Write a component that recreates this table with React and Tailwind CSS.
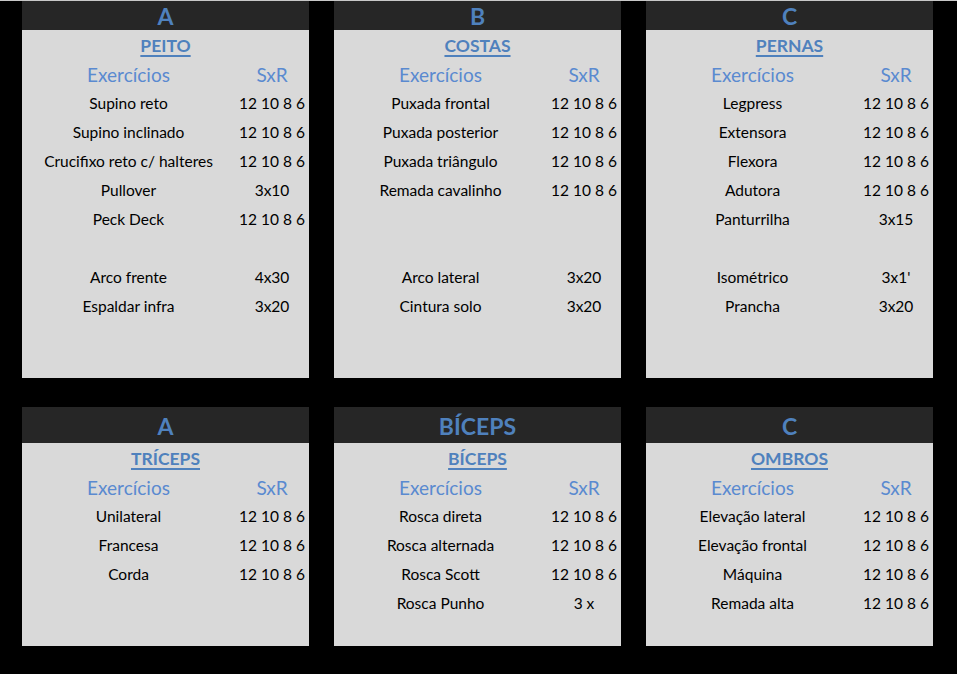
const top = [
  {
    h: "A",
    t: "PEITO",
    rows: [
      ["Supino reto", "12 10 8 6"],
      ["Supino inclinado", "12 10 8 6"],
      ["Crucifixo reto c/ halteres", "12 10 8 6"],
      ["Pullover", "3x10"],
      ["Peck Deck", "12 10 8 6"],
      ["", ""],
      ["Arco frente", "4x30"],
      ["Espaldar infra", "3x20"],
    ],
  },
  {
    h: "B",
    t: "COSTAS",
    rows: [
      ["Puxada frontal", "12 10 8 6"],
      ["Puxada posterior", "12 10 8 6"],
      ["Puxada triângulo", "12 10 8 6"],
      ["Remada cavalinho", "12 10 8 6"],
      ["", ""],
      ["", ""],
      ["Arco lateral", "3x20"],
      ["Cintura solo", "3x20"],
    ],
  },
  {
    h: "C",
    t: "PERNAS",
    rows: [
      ["Legpress", "12 10 8 6"],
      ["Extensora", "12 10 8 6"],
      ["Flexora", "12 10 8 6"],
      ["Adutora", "12 10 8 6"],
      ["Panturrilha", "3x15"],
      ["", ""],
      ["Isométrico", "3x1'"],
      ["Prancha", "3x20"],
    ],
  },
];

const bottom = [
  {
    h: "A",
    t: "TRÍCEPS",
    rows: [
      ["Unilateral", "12 10 8 6"],
      ["Francesa", "12 10 8 6"],
      ["Corda", "12 10 8 6"],
    ],
  },
  {
    h: "BÍCEPS",
    t: "BÍCEPS",
    rows: [
      ["Rosca direta", "12 10 8 6"],
      ["Rosca alternada", "12 10 8 6"],
      ["Rosca Scott", "12 10 8 6"],
      ["Rosca Punho", "3 x"],
    ],
  },
  {
    h: "C",
    t: "OMBROS",
    rows: [
      ["Elevação lateral", "12 10 8 6"],
      ["Elevação frontal", "12 10 8 6"],
      ["Máquina", "12 10 8 6"],
      ["Remada alta", "12 10 8 6"],
    ],
  },
];

function Card({ c, tall }) {
  return (
    <div className="flex flex-col w-[287px]">
      <div
        className={
          "bg-[#262626] flex items-center justify-center text-[#4f81bd] font-bold text-[23px] leading-none pt-[2px] " +
          (tall ? "h-[36px]" : "h-[29px]")
        }
      >
        {c.h}
      </div>
      <div
        className={
          "bg-[#d9d9d9] flex flex-col " + (tall ? "h-[203px]" : "h-[348px]")
        }
      >
        <div className="h-[29px] flex items-center justify-center pt-[2px]">
          <span className="text-[#4f81bd] font-bold text-[17.5px] underline underline-offset-[3px] decoration-[1.5px] leading-none">
            {c.t}
          </span>
        </div>
        <div className="h-[29px] flex items-center pt-[2px]">
          <div className="w-[213px] text-center text-[#5a8ad0] text-[19px] leading-none">
            Exercícios
          </div>
          <div className="flex-1 text-center text-[#5a8ad0] text-[19px] leading-none">
            SxR
          </div>
        </div>
        {c.rows.map((r, i) => (
          <div key={i} className="h-[29px] flex items-center text-[15.5px] text-black leading-none pt-[2px]">
            <div className="w-[213px] text-center whitespace-nowrap">{r[0]}</div>
            <div className="flex-1 text-center whitespace-nowrap">{r[1]}</div>
          </div>
        ))}
      </div>
    </div>
  );
}

export default function App() {
  return (
    <div
      className="w-[957px] h-[674px] bg-black border-t border-[#c8c8c8] overflow-hidden"
      style={{ fontFamily: "Lato, 'Open Sans', sans-serif" }}
    >
      <div className="flex gap-[25px] pl-[22px]">
        {top.map((c, i) => (
          <Card key={i} c={c} />
        ))}
      </div>
      <div className="flex gap-[25px] pl-[22px] mt-[29px]">
        {bottom.map((c, i) => (
          <Card key={i} c={c} tall />
        ))}
      </div>
    </div>
  );
}
